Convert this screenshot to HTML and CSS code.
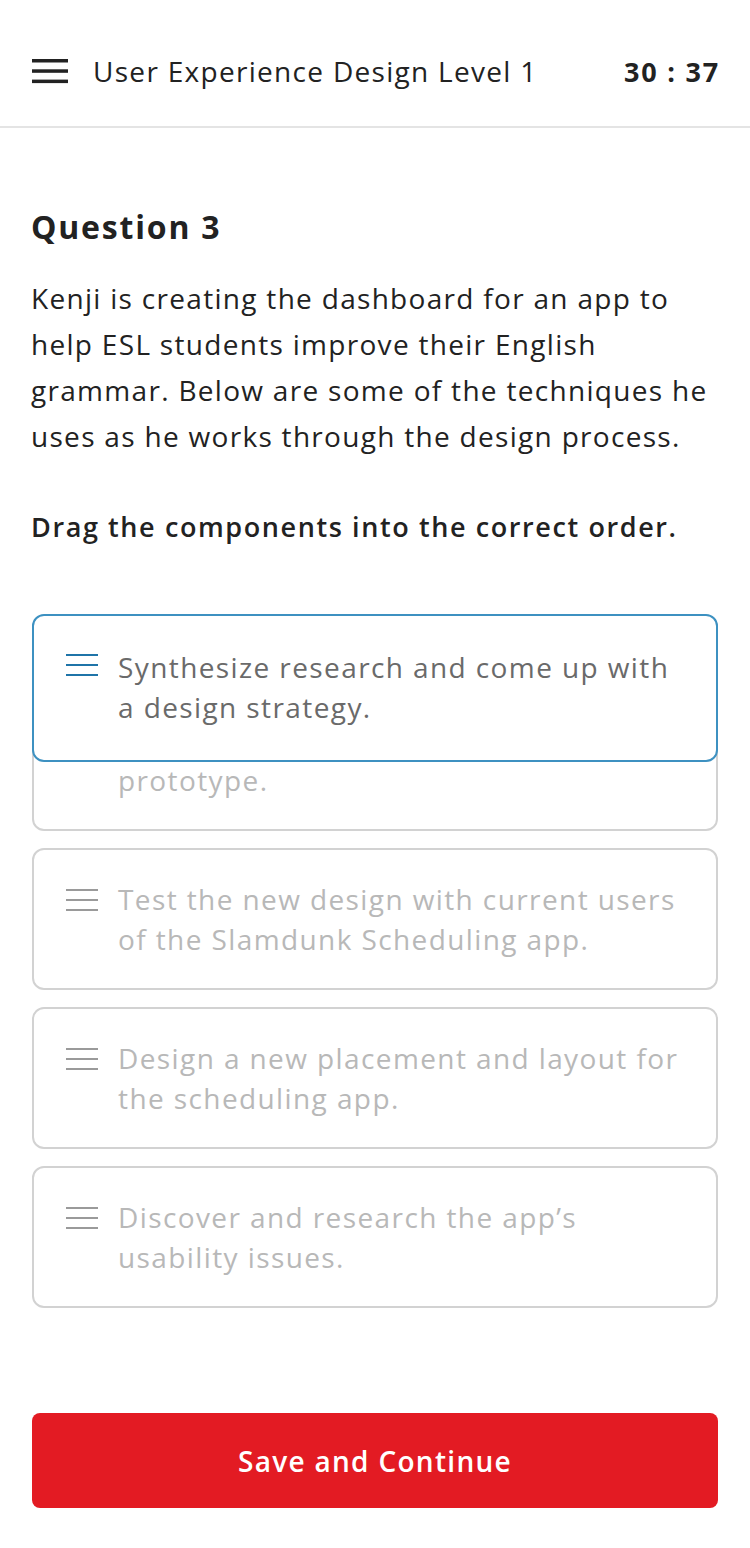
FILE: index.html
```html
<!DOCTYPE html>
<html lang="en">
<head>
<meta charset="utf-8">
<title>Question 3</title>
<link rel="stylesheet" href="styles.css">
</head>
<body>
<header class="topbar">
  <svg class="menu-icon" width="36" height="26" viewBox="0 0 36 26" aria-hidden="true">
    <rect x="0" y="1" width="36" height="3.5" fill="#222"/>
    <rect x="0" y="11.3" width="36" height="3.5" fill="#222"/>
    <rect x="0" y="21.6" width="36" height="3.5" fill="#222"/>
  </svg>
  <div class="course-title">User Experience Design Level 1</div>
  <div class="timer">30 : 37</div>
</header>

<main class="content">
  <h1 class="q-title">Question 3</h1>
  <p class="q-text">Kenji is creating the dashboard for an app to help ESL students improve their English grammar. Below are some of the techniques he uses as he works through the design process.</p>
  <p class="q-instruction">Drag the components into the correct order.</p>

  <div class="order-list">
    <div class="order-card dragging">
      <svg class="grip" width="32" height="24" viewBox="0 0 32 24" aria-hidden="true">
        <rect x="0" y="1" width="32" height="2" fill="#1f74a8"/>
        <rect x="0" y="11" width="32" height="2" fill="#1f74a8"/>
        <rect x="0" y="21" width="32" height="2" fill="#1f74a8"/>
      </svg>
      <span class="card-text">Synthesize research and come up with a design strategy.</span>
    </div>

    <div class="order-card">
      <svg class="grip" width="32" height="24" viewBox="0 0 32 24" aria-hidden="true">
        <rect x="0" y="1" width="32" height="2" fill="#9a9a9a"/>
        <rect x="0" y="11" width="32" height="2" fill="#9a9a9a"/>
        <rect x="0" y="21" width="32" height="2" fill="#9a9a9a"/>
      </svg>
      <span class="card-text">Create a low-fidelity interactive prototype.</span>
    </div>

    <div class="order-card">
      <svg class="grip" width="32" height="24" viewBox="0 0 32 24" aria-hidden="true">
        <rect x="0" y="1" width="32" height="2" fill="#9a9a9a"/>
        <rect x="0" y="11" width="32" height="2" fill="#9a9a9a"/>
        <rect x="0" y="21" width="32" height="2" fill="#9a9a9a"/>
      </svg>
      <span class="card-text">Test the new design with current users of the Slamdunk Scheduling app.</span>
    </div>

    <div class="order-card">
      <svg class="grip" width="32" height="24" viewBox="0 0 32 24" aria-hidden="true">
        <rect x="0" y="1" width="32" height="2" fill="#9a9a9a"/>
        <rect x="0" y="11" width="32" height="2" fill="#9a9a9a"/>
        <rect x="0" y="21" width="32" height="2" fill="#9a9a9a"/>
      </svg>
      <span class="card-text">Design a new placement and layout for the scheduling app.</span>
    </div>

    <div class="order-card">
      <svg class="grip" width="32" height="24" viewBox="0 0 32 24" aria-hidden="true">
        <rect x="0" y="1" width="32" height="2" fill="#9a9a9a"/>
        <rect x="0" y="11" width="32" height="2" fill="#9a9a9a"/>
        <rect x="0" y="21" width="32" height="2" fill="#9a9a9a"/>
      </svg>
      <span class="card-text">Discover and research the app’s usability issues.</span>
    </div>
  </div>

  <button class="save-btn" type="button">Save and Continue</button>
</main>
</body>
</html>
```

FILE: styles.css
```css
* {
  box-sizing: border-box;
}

html, body {
  margin: 0;
  padding: 0;
  background: #ffffff;
}

body {
  width: 750px;
  font-family: "Open Sans", "Lato", sans-serif;
  color: #222222;
}

.topbar {
  height: 128px;
  padding: 16px 32px 0 32px;
  display: flex;
  align-items: center;
  border-bottom: 2px solid #e4e4e4;
}

.menu-icon {
  flex: none;
  display: block;
}

.course-title {
  margin-left: 25px;
  font-size: 28px;
  letter-spacing: 1.3px;
  color: #222222;
  flex: 1;
}

.timer {
  font-size: 27px;
  font-weight: 700;
  letter-spacing: 1.8px;
  margin-right: -2px;
  color: #222222;
}

.content {
  padding: 0 32px 39px 32px;
}

.q-title {
  margin: 76px 0 0 -1px;
  font-size: 32px;
  font-weight: 700;
  letter-spacing: 1.8px;
  line-height: 46px;
}

.q-text {
  margin: 25px 0 0 -1px;
  font-size: 28px;
  letter-spacing: 1.3px;
  line-height: 46px;
}

.q-instruction {
  margin: 45px 0 0 -1px;
  font-size: 27px;
  font-weight: 600;
  letter-spacing: 1.6px;
  line-height: 46px;
}

.order-list {
  position: relative;
  margin-top: 139px;
  display: flex;
  flex-direction: column;
  gap: 17px;
}

.order-card {
  height: 142px;
  border: 2px solid #d2d2d2;
  border-radius: 12px;
  padding: 29px 24px 29px 32px;
  display: flex;
  align-items: flex-start;
  gap: 20px;
  background: #ffffff;
}

.grip {
  flex: none;
  display: block;
  margin-top: 9px;
}

.card-text {
  font-size: 28px;
  letter-spacing: 1.4px;
  line-height: 40px;
  color: #b8b8b8;
}

.order-card.dragging {
  position: absolute;
  top: -75px;
  left: 0;
  right: 0;
  height: 148px;
  padding-top: 31px;
  border: 2px solid #3d91c1;
  z-index: 2;
}

.order-card.dragging .grip {
  margin-top: 6px;
}

.order-card.dragging .card-text {
  color: #6a6a6a;
}

.save-btn {
  display: block;
  width: 100%;
  height: 95px;
  margin-top: 105px;
  border: none;
  border-radius: 8px;
  background: #e31b23;
  color: #ffffff;
  font-family: "Open Sans", "Lato", sans-serif;
  font-size: 28px;
  font-weight: 600;
  letter-spacing: 1.3px;
}
```
